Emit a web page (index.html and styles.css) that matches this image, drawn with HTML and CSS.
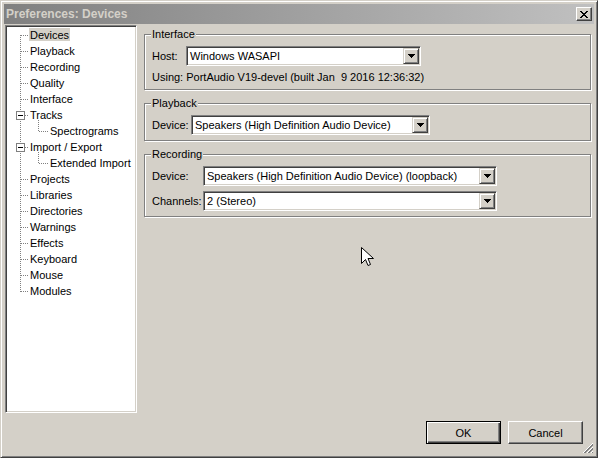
FILE: index.html
```html
<!DOCTYPE html>
<html lang="en">
<head>
    <meta charset="UTF-8">
    <title>Preferences: Devices</title>
    <link rel="stylesheet" href="styles.css">
</head>
<body>
<div class="window">

    <!-- Title bar -->
    <div class="titlebar">
        <span class="title">Preferences: Devices</span>
        <span class="close-btn">
            <svg width="8" height="7" viewBox="0 0 8 7"><path d="M0 0h2v1H0zM6 0h2v1H6zM1 1h2v1H1zM5 1h2v1H5zM2 2h4v1H2zM3 3h2v1H3zM2 4h4v1H2zM1 5h2v1H1zM5 5h2v1H5zM0 6h2v1H0zM6 6h2v1H6z"/></svg>
        </span>
    </div>

    <div class="client">
        <div class="main">

            <!-- Category tree -->
            <div class="tree">
                <ul class="tree-root">
                    <li class="node"><span class="label selected">Devices</span></li>
                    <li class="node"><span class="label">Playback</span></li>
                    <li class="node"><span class="label">Recording</span></li>
                    <li class="node"><span class="label">Quality</span></li>
                    <li class="node"><span class="label">Interface</span></li>
                    <li class="node"><span class="toggle"></span><span class="label">Tracks</span></li>
                    <li class="node child"><span class="label">Spectrograms</span></li>
                    <li class="node"><span class="toggle"></span><span class="label">Import / Export</span></li>
                    <li class="node child"><span class="label">Extended Import</span></li>
                    <li class="node"><span class="label">Projects</span></li>
                    <li class="node"><span class="label">Libraries</span></li>
                    <li class="node"><span class="label">Directories</span></li>
                    <li class="node"><span class="label">Warnings</span></li>
                    <li class="node"><span class="label">Effects</span></li>
                    <li class="node"><span class="label">Keyboard</span></li>
                    <li class="node"><span class="label">Mouse</span></li>
                    <li class="node"><span class="label">Modules</span></li>
                </ul>
            </div>

            <!-- Devices page -->
            <div class="pages">
                <fieldset class="group">
                    <legend>Interface</legend>
                    <div class="field">
                        <span class="field-label host-label">Host:</span>
                        <div class="combo host-combo">
                            <span class="value">Windows WASAPI</span>
                            <span class="drop"><svg width="7" height="4" viewBox="0 0 7 4"><path d="M0 0h7v1H0zM1 1h5v1H1zM2 2h3v1H2zM3 3h1v1H3z"/></svg></span>
                        </div>
                    </div>
                    <div class="info">Using: PortAudio V19-devel (built Jan&nbsp; 9 2016 12:36:32)</div>
                </fieldset>

                <fieldset class="group">
                    <legend>Playback</legend>
                    <div class="field">
                        <span class="field-label play-label">Device:</span>
                        <div class="combo play-combo">
                            <span class="value">Speakers (High Definition Audio Device)</span>
                            <span class="drop"><svg width="7" height="4" viewBox="0 0 7 4"><path d="M0 0h7v1H0zM1 1h5v1H1zM2 2h3v1H2zM3 3h1v1H3z"/></svg></span>
                        </div>
                    </div>
                </fieldset>

                <fieldset class="group">
                    <legend>Recording</legend>
                    <div class="field">
                        <span class="field-label rec-label">Device:</span>
                        <div class="combo rec-combo">
                            <span class="value">Speakers (High Definition Audio Device) (loopback)</span>
                            <span class="drop"><svg width="7" height="4" viewBox="0 0 7 4"><path d="M0 0h7v1H0zM1 1h5v1H1zM2 2h3v1H2zM3 3h1v1H3z"/></svg></span>
                        </div>
                    </div>
                    <div class="field">
                        <span class="field-label rec-label">Channels:</span>
                        <div class="combo rec-combo">
                            <span class="value">2 (Stereo)</span>
                            <span class="drop"><svg width="7" height="4" viewBox="0 0 7 4"><path d="M0 0h7v1H0zM1 1h5v1H1zM2 2h3v1H2zM3 3h1v1H3z"/></svg></span>
                        </div>
                    </div>
                </fieldset>
            </div>
        </div>

        <!-- Dialog buttons -->
        <div class="footer">
            <button class="btn default">OK</button>
            <button class="btn">Cancel</button>
        </div>
    </div>

    <!-- size grip -->
    <svg class="grip" width="12" height="12" viewBox="0 0 12 12">
        <path d="M11 1L1 11M11 5L5 11M11 9L9 11" stroke="#fff" stroke-width="1"/>
        <path d="M11 2L2 11M11 3L3 11M11 6L6 11M11 7L7 11M11 10L10 11" stroke="#808080" stroke-width="1"/>
    </svg>

    <!-- mouse pointer -->
    <svg class="cursor" width="13" height="20" viewBox="0 0 13 20">
        <path d="M0.5 0.5V16.5L4.5 12.5L7 18.5L9.5 17.5L7 11.5H12.5Z" fill="#fff" stroke="#000" stroke-width="1"/>
    </svg>
</div>
</body>
</html>
```

FILE: styles.css
```css
body {
    margin: 0;
    padding: 0;
    font-family: "Liberation Sans", Arial, sans-serif;
    font-size: 11px;
    color: #000;
    background-color: #d4d0c8;
}
.window {
    position: relative;
    width: 598px;
    height: 458px;
    box-sizing: border-box;
    border: 1px solid;
    border-color: #d4d0c8 #404040 #404040 #d4d0c8;
    box-shadow: inset 1px 1px #fff, inset -1px -1px #808080;
    padding: 3px;
    background-color: #d4d0c8;
    display: flex;
    flex-direction: column;
}
.titlebar {
    height: 20px;
    display: flex;
    align-items: center;
    justify-content: space-between;
    padding: 0 2px 0 2px;
    background: linear-gradient(to right, #808080, #c0c0c0);
}
.title {
    font-weight: bold;
    font-size: 12px;
    color: #d4d0c8;
}
.close-btn {
    width: 16px;
    height: 14px;
    box-sizing: border-box;
    border: 1px solid;
    border-color: #fff #404040 #404040 #fff;
    box-shadow: inset -1px -1px #808080;
    background-color: #d4d0c8;
    display: flex;
    align-items: center;
    justify-content: center;
    padding-right: 1px;
}
.client {
    flex: 1;
    display: flex;
    flex-direction: column;
}
.main {
    display: flex;
    align-items: flex-start;
}

/* tree */
.tree {
    margin: 1px 0 0 1px;
    width: 132px;
    height: 388px;
    box-sizing: border-box;
    border: 1px solid;
    border-color: #808080 #fff #fff #808080;
    box-shadow: inset 1px 1px #404040, inset -1px -1px #d4d0c8;
    background-color: #fff;
    padding: 1px;
}
.tree-root {
    position: relative;
    list-style: none;
    margin: 0;
    padding: 0;
}
.tree-root::before {
    content: "";
    position: absolute;
    left: 13px;
    top: 8px;
    width: 1px;
    height: 257px;
    background: repeating-linear-gradient(to bottom, #808080 0 1px, transparent 1px 2px);
}
.node {
    position: relative;
    height: 16px;
    line-height: 16px;
    padding-left: 22px;
    white-space: nowrap;
}
.node::before {
    content: "";
    position: absolute;
    left: 14px;
    top: 8px;
    width: 8px;
    height: 1px;
    background: repeating-linear-gradient(to right, #808080 0 1px, transparent 1px 2px);
}
.node.child {
    padding-left: 42px;
}
.node.child::before {
    left: 32px;
    width: 9px;
}
.node.child::after {
    content: "";
    position: absolute;
    left: 31px;
    top: -3px;
    width: 1px;
    height: 11px;
    background: repeating-linear-gradient(to bottom, #808080 0 1px, transparent 1px 2px);
}
.label {
    padding: 1px 1px 0;
}
.label.selected {
    background-color: #d4d0c8;
}
.toggle {
    position: absolute;
    left: 9px;
    top: 4px;
    width: 9px;
    height: 9px;
    box-sizing: border-box;
    border: 1px solid #808080;
    background-color: #fff;
    z-index: 1;
}
.toggle::after {
    content: "";
    position: absolute;
    left: 1px;
    top: 3px;
    width: 5px;
    height: 1px;
    background-color: #000;
}

/* right side page */
.pages {
    margin-left: 7px;
    padding-top: 4px;
    width: 447px;
}
.group {
    margin: 0 0 7px;
    padding: 5px 6px 5px 7px;
    border: 1px solid #808080;
    box-shadow: inset 1px 1px #fff, 1px 1px #fff;
    min-inline-size: 0;
}
.group legend {
    padding: 0 1px;
    margin-left: -1px;
    line-height: 13px;
    background-color: #d4d0c8;
}
.field {
    display: flex;
    align-items: center;
    height: 20px;
}
.field + .field {
    margin-top: 5px;
}
.host-label { width: 34px; }
.play-label { width: 39px; }
.rec-label { width: 51px; }
.combo {
    height: 20px;
    box-sizing: border-box;
    border: 1px solid;
    border-color: #808080 #fff #fff #808080;
    box-shadow: inset 1px 1px #404040, inset -1px -1px #d4d0c8;
    background-color: #fff;
    display: flex;
    align-items: center;
    padding: 1px;
}
.host-combo { width: 235px; }
.play-combo { width: 239px; }
.rec-combo { width: 294px; }
.combo .value {
    flex: 1;
    padding-left: 2px;
    line-height: 16px;
    white-space: nowrap;
    overflow: hidden;
}
.drop {
    width: 16px;
    height: 16px;
    box-sizing: border-box;
    border: 1px solid;
    border-color: #d4d0c8 #404040 #404040 #d4d0c8;
    box-shadow: inset 1px 1px #fff, inset -1px -1px #808080;
    background-color: #d4d0c8;
    display: flex;
    align-items: center;
    justify-content: center;
}
.info {
    margin-top: 5px;
    line-height: 13px;
    white-space: nowrap;
}

/* buttons */
.footer {
    margin-top: 8px;
    display: flex;
    justify-content: flex-end;
    gap: 7px;
    padding-right: 11px;
}
.btn {
    width: 75px;
    height: 23px;
    box-sizing: border-box;
    font-family: "Liberation Sans", Arial, sans-serif;
    font-size: 11px;
    color: #000;
    background-color: #d4d0c8;
    border: 1px solid;
    border-color: #fff #404040 #404040 #fff;
    box-shadow: inset -1px -1px #808080;
    padding: 0;
}
.btn.default {
    border-color: #000;
    box-shadow: inset 1px 1px #fff, inset -1px -1px #404040, inset -2px -2px #808080;
}
.grip {
    position: absolute;
    right: 3px;
    bottom: 3px;
}
.cursor {
    position: absolute;
    left: 360px;
    top: 246px;
}
```
